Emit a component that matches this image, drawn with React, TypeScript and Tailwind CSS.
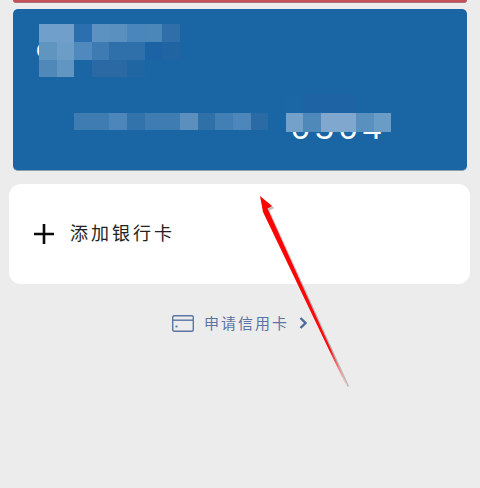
import React from 'react';

const CJK = "font-['Noto_Sans_CJK_SC','Noto_Sans',sans-serif]";

// pixelated tiles that hide the card's name and number: [x, y, w, h, colour]
const tiles: [number, number, number, number, string][] = [
  [26, 15, 18, 18, '#6f9fca'],
  [44, 15, 17, 18, '#6f9fca'],
  [61, 15, 18, 18, '#2b6fae'],
  [79, 15, 17, 18, '#5c91c1'],
  [96, 15, 18, 18, '#5a90bf'],
  [114, 15, 18, 18, '#4a86bb'],
  [132, 15, 17, 18, '#4c87ba'],
  [149, 15, 18, 18, '#2f6ea8'],
  [26, 33, 18, 18, '#5f95bf'],
  [44, 33, 17, 18, '#6c9dc7'],
  [61, 33, 18, 18, '#5089bd'],
  [79, 33, 17, 18, '#3f7bb3'],
  [96, 33, 18, 18, '#2f70ab'],
  [114, 33, 18, 18, '#2f70ab'],
  [132, 33, 17, 18, '#1b63a4'],
  [149, 33, 18, 18, '#2164a2'],
  [26, 51, 18, 17, '#5088b9'],
  [44, 51, 17, 17, '#6196c3'],
  [79, 51, 17, 17, '#2a69a4'],
  [96, 51, 18, 17, '#2a69a4'],
  [114, 51, 18, 17, '#1f66a3'],
  [61, 104, 18, 17, '#3f7cb2'],
  [79, 104, 17, 17, '#3f7cb2'],
  [96, 104, 18, 17, '#4c86ba'],
  [114, 104, 18, 17, '#3273ac'],
  [132, 104, 17, 17, '#3f7cb2'],
  [149, 104, 18, 17, '#3f7cb2'],
  [167, 104, 18, 17, '#5a8fbe'],
  [185, 104, 17, 17, '#2f70a9'],
  [202, 104, 18, 17, '#427fb5'],
  [220, 104, 18, 17, '#4c86ba'],
  [238, 104, 17, 17, '#2a6ba6'],
  [273, 86, 17, 18, '#1b66a5'],
  [290, 86, 53, 18, '#1e64a4'],
  [273, 104, 17, 19, '#74a1c9'],
  [290, 104, 18, 19, '#4f89ba'],
  [308, 104, 35, 19, '#80a8ce'],
  [343, 104, 18, 19, '#5a90bf'],
  [361, 104, 17, 19, '#6b9cc6'],
];

function CardIcon() {
  return (
    <svg width="22" height="17" viewBox="0 0 22 17" fill="none" stroke="#5b74a3" strokeWidth="1.4">
      <rect x="0.7" y="0.7" width="20.6" height="15.6" rx="1.5" />
      <path d="M1 5.2h20" />
      <path d="M3.500 11.500h2" strokeWidth="1.8" />
    </svg>
  );
}

export default function App() {
  return (
    <div className="relative w-[480px] h-[488px] overflow-hidden bg-[#ececec] flex flex-col">
      <div className="mx-[13px] h-[3px] rounded-b-[3px] bg-[#c5505a] border-b border-[#a9707a]" />

      <div className="relative mx-[13px] mt-[6px] h-[162px] rounded-[5px] bg-[#1a66a5] border-b border-[#8e9fae] overflow-hidden text-white font-['Liberation_Sans',sans-serif]">
        <span className="absolute left-[23px] top-[29px] text-[22px] leading-[26px]">C</span>
        <span className="absolute left-[278px] top-[100px] text-[34px] leading-[36px] tracking-[5px]">0504</span>
        <svg className="absolute left-0 top-0" width="453" height="161">
          {tiles.map(([x, y, w, h, fill], i) => (
            <rect key={i} x={x} y={y} width={w} height={h} fill={fill} />
          ))}
        </svg>
      </div>

      <div className="ml-[9px] mr-[10px] mt-[13px] h-[100px] rounded-[12px] bg-white flex items-center pl-[25px] gap-[17px]">
        <svg width="20" height="20" viewBox="0 0 20 20" stroke="#0a0a0a" strokeWidth="2.6">
          <path d="M0 10h20M10 0v20" />
        </svg>
        <span className={`${CJK} relative -top-[2px] -left-[1px] text-[18px] leading-[24px] tracking-[3px] text-[#222222]`}>添加银行卡</span>
      </div>

      <div className="mt-[29px] pl-[172px] flex items-center h-[20px]">
        <CardIcon />
        <span className={`${CJK} ml-[10px] text-[15px] leading-[20px] tracking-[2px] text-[#5b74a3]`}>申请信用卡</span>
        <svg className="ml-[10px]" width="8" height="12" viewBox="0 0 8 12" fill="none" stroke="#4f6a9b" strokeWidth="2.4">
          <path d="M1.500 1l5 5-5 5" />
        </svg>
      </div>

      {/* red annotation arrow drawn over the screenshot */}
      <svg className="absolute left-0 top-0 pointer-events-none" width="480" height="488">
        <defs>
          <linearGradient id="shaft" gradientUnits="userSpaceOnUse" x1="262" y1="200" x2="347" y2="386">
            <stop offset="0" stopColor="#ff0000" />
            <stop offset="0.8" stopColor="#ff0a0a" />
            <stop offset="1" stopColor="#f6e4e4" />
          </linearGradient>
        </defs>
        <path d="M262 198L274.500 208L269.500 210.500L349 386L347.500 387L265 214Z" fill="#555555" opacity="0.35" />
        <path d="M260 196L272 206L267.500 208.500L347.500 386L346.500 386.500L263 212Z" fill="url(#shaft)" />
      </svg>
    </div>
  );
}
